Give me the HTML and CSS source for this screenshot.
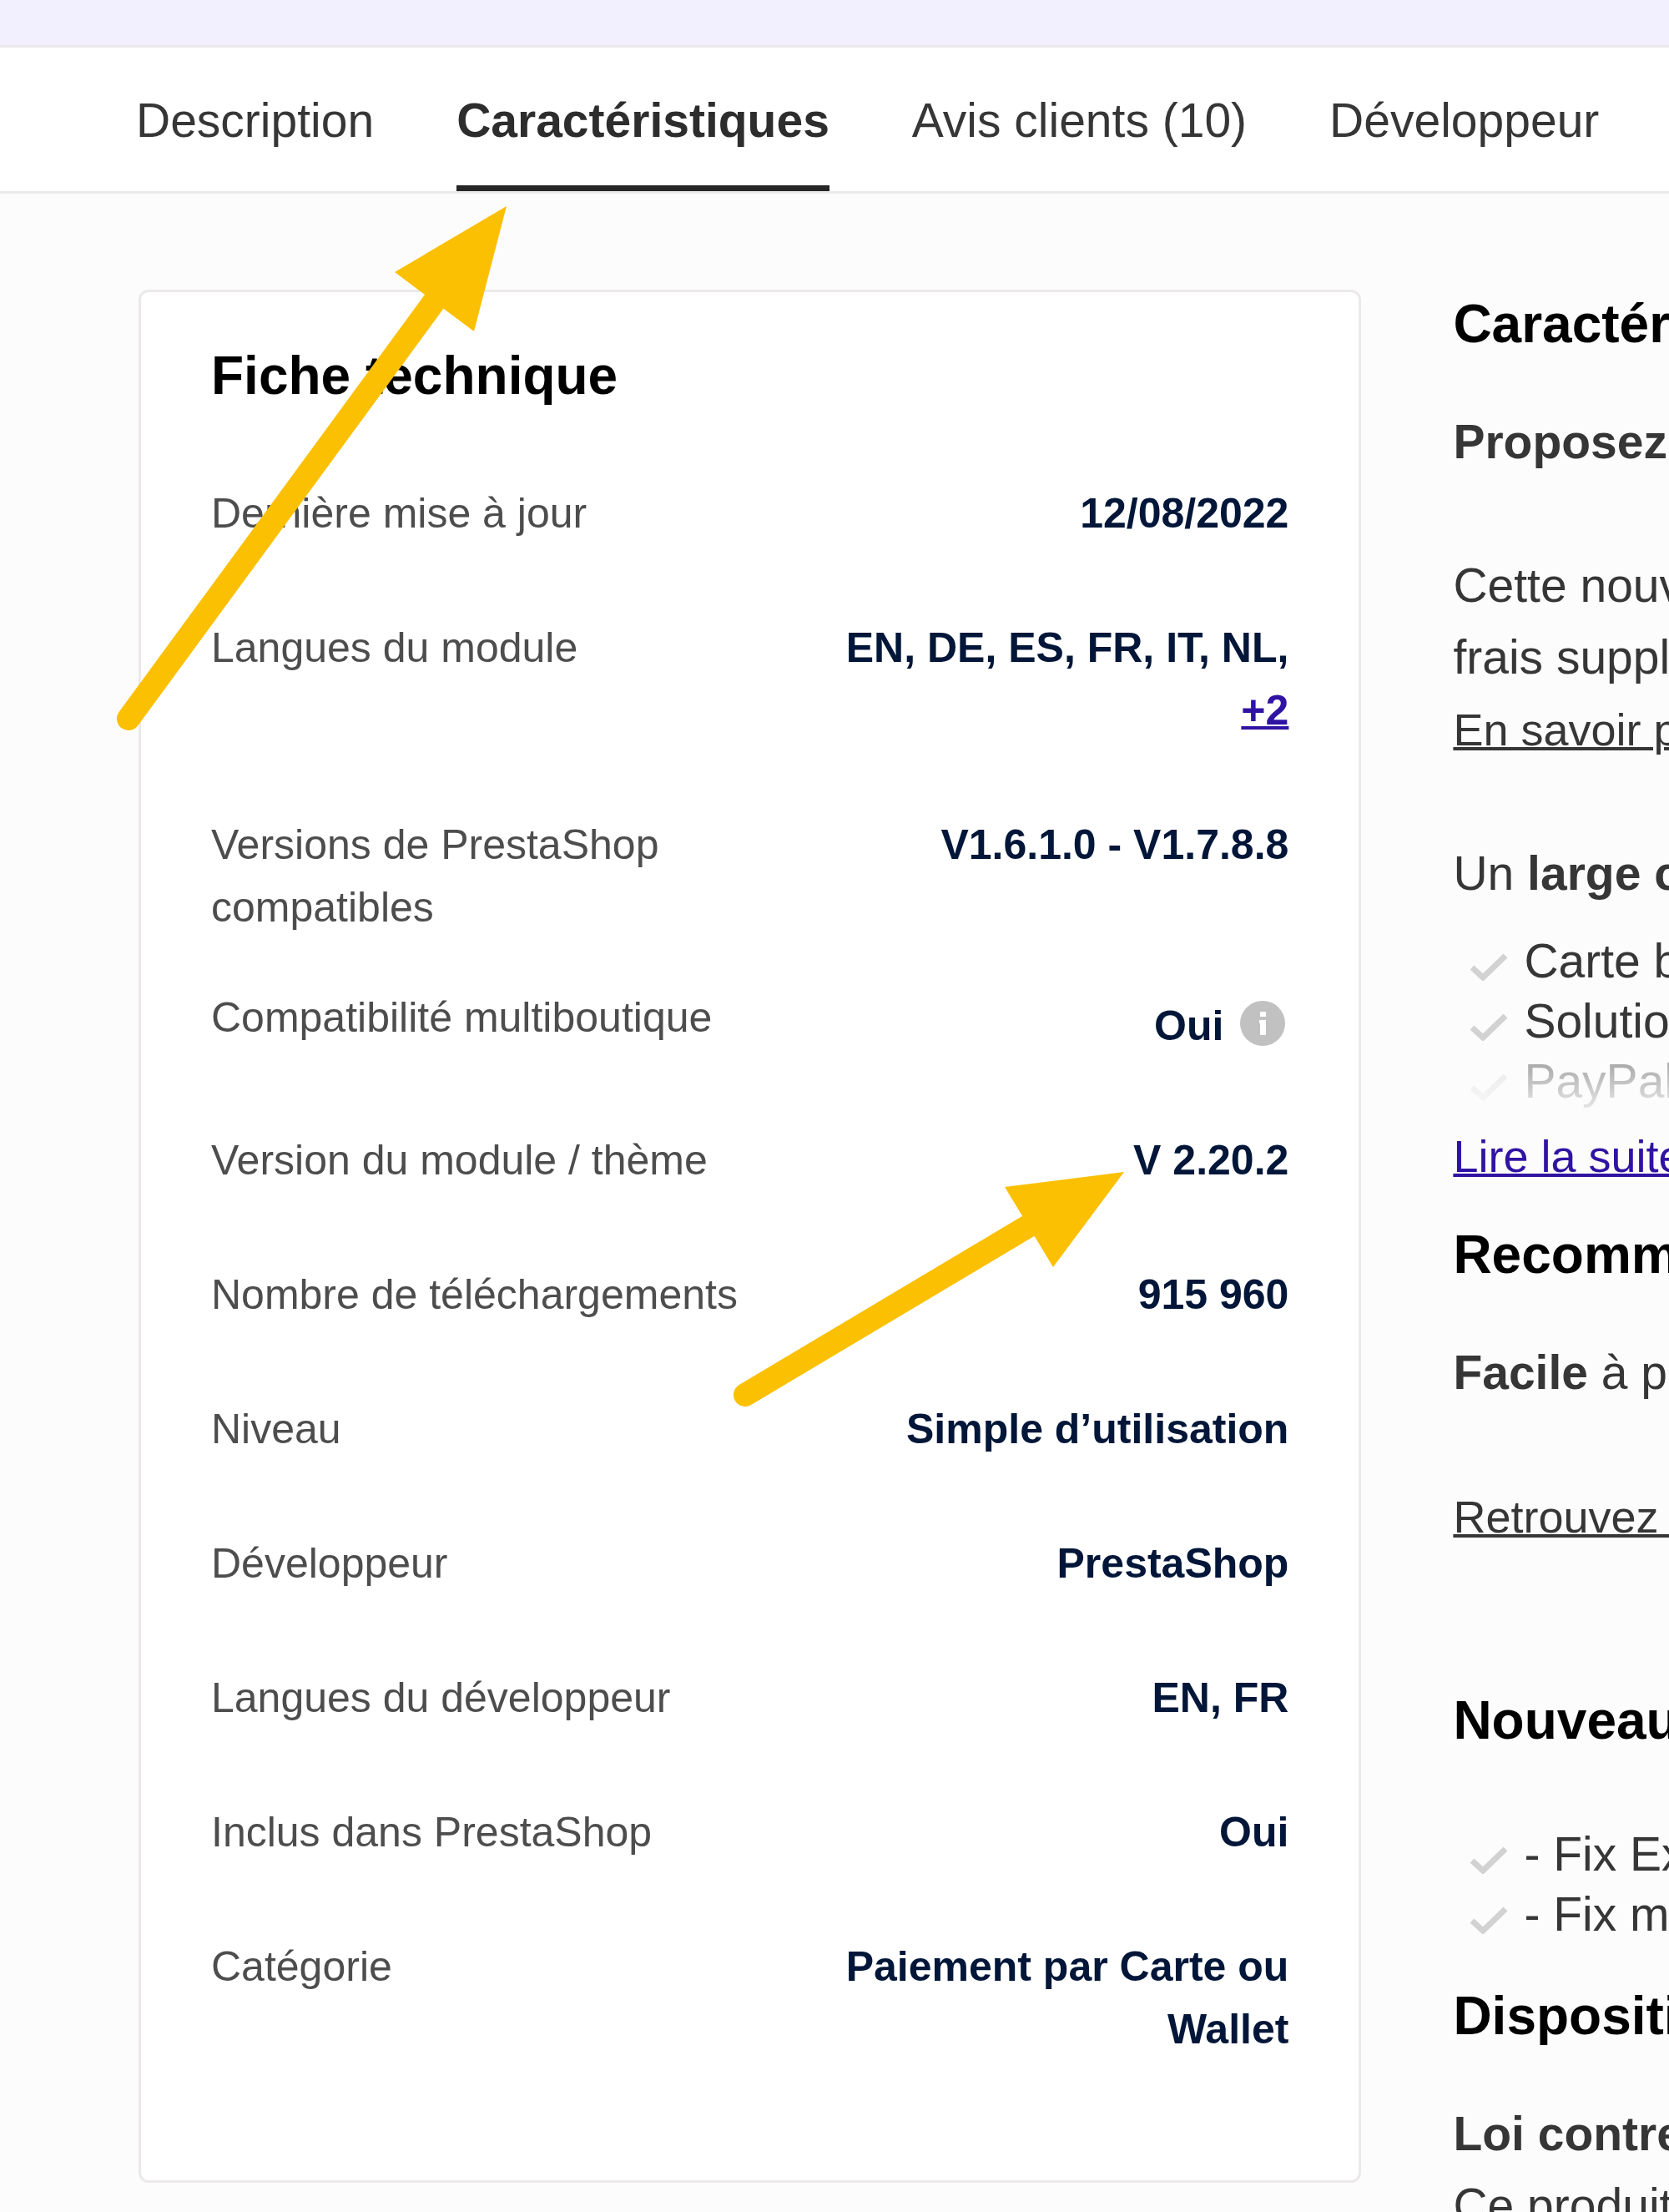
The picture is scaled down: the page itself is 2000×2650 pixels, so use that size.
FILE: index.html
```html
<!DOCTYPE html>
<html lang="fr">
<head>
    <meta charset="UTF-8">
    <meta name="viewport" content="width=device-width, initial-scale=1.0">
    <title>Caractéristiques du module</title>
    <link rel="stylesheet" href="styles.css">
</head>
<body>
    <div class="topbar"></div>

    <nav class="tabs">
        <a href="#description">Description</a>
        <a href="#caracteristiques" class="active">Caractéristiques</a>
        <a href="#avis">Avis clients (10)</a>
        <a href="#developpeur">Développeur</a>
    </nav>

    <main class="content">
        <section class="card" id="caracteristiques">
            <h2>Fiche technique</h2>
            <dl class="specs">
                <div class="row"><dt>Dernière mise à jour</dt><dd>12/08/2022</dd></div>
                <div class="row"><dt>Langues du module</dt><dd>EN, DE, ES, FR, IT, NL, <a href="#langues">+2</a></dd></div>
                <div class="row"><dt>Versions de PrestaShop compatibles</dt><dd>V1.6.1.0 - V1.7.8.8</dd></div>
                <div class="row">
                    <dt>Compatibilité multiboutique</dt>
                    <dd class="with-info">
                        <span>Oui</span>
                        <svg class="info" viewBox="0 0 54 54" aria-hidden="true">
                            <circle cx="27" cy="27" r="27" fill="#c1c1c1"/>
                            <rect x="24" y="13" width="7" height="6" fill="#fff"/>
                            <path d="M23 23h8v18h-7V27h-1z" fill="#fff"/>
                        </svg>
                    </dd>
                </div>
                <div class="row"><dt>Version du module / thème</dt><dd>V 2.20.2</dd></div>
                <div class="row"><dt>Nombre de téléchargements</dt><dd>915 960</dd></div>
                <div class="row"><dt>Niveau</dt><dd>Simple d’utilisation</dd></div>
                <div class="row"><dt>Développeur</dt><dd>PrestaShop</dd></div>
                <div class="row"><dt>Langues du développeur</dt><dd>EN, FR</dd></div>
                <div class="row"><dt>Inclus dans PrestaShop</dt><dd>Oui</dd></div>
                <div class="row"><dt>Catégorie</dt><dd>Paiement par Carte ou Wallet</dd></div>
            </dl>
        </section>

        <section class="details">
            <h2>Caractéristiques</h2>
            <div class="excerpt">
                <p>
                    <strong>Proposez</strong><br><br>
                    Cette nouvelle<br>
                    frais supplémentaires<br>
                    <a href="#savoir">En savoir plus</a><br><br>
                    Un <strong>large choix</strong>
                </p>
                <ul class="checks">
                    <li><svg viewBox="0 0 44 34"><path d="M2 18l13 12L42 4"/></svg>Carte bancaire</li>
                    <li><svg viewBox="0 0 44 34"><path d="M2 18l13 12L42 4"/></svg>Solutions</li>
                    <li><svg viewBox="0 0 44 34"><path d="M2 18l13 12L42 4"/></svg>PayPal</li>
                </ul>
            </div>
            <a href="#suite" class="more">Lire la suite</a>

            <h2>Recommandation</h2>
            <p><strong>Facile</strong> à paramétrer<br><br><a href="#doc">Retrouvez la documentation</a></p>

            <h2 class="news">Nouveautés</h2>
            <ul class="checks">
                <li><svg viewBox="0 0 44 34"><path d="M2 18l13 12L42 4"/></svg>- Fix Express</li>
                <li><svg viewBox="0 0 44 34"><path d="M2 18l13 12L42 4"/></svg>- Fix module</li>
            </ul>

            <h2 class="legal">Dispositif</h2>
            <p><strong>Loi contre</strong><br>Ce produit</p>
        </section>
    </main>

    <!-- flèches posées sur la page -->
    <svg class="arrow arrow-tab" viewBox="0 0 480 640" aria-hidden="true">
        <path d="M24 624L389 126" stroke-width="28" stroke-linecap="round"/>
        <path class="head" d="M477 10L343 89l95 71z"/>
    </svg>
    <svg class="arrow arrow-version" viewBox="0 0 480 300" aria-hidden="true">
        <path d="M23 281L362 79" stroke-width="28" stroke-linecap="round"/>
        <path class="head" d="M477 14L334 32l58 96z"/>
    </svg>
</body>
</html>
```
FILE: styles.css
```css
* {
    box-sizing: border-box;
}
body {
    font-family: "Liberation Sans", Arial, sans-serif;
    font-size: 57px;
    line-height: 86px;
    color: #363636;
    background-color: #fcfcfc;
    margin: 0;
    position: relative;
    height: 100vh;
    overflow: hidden;
}
h2, p, dl, dd, ul {
    margin: 0;
    padding: 0;
}
a {
    color: inherit;
    text-decoration-thickness: 4px;
}
h2 {
    font-size: 64px;
    color: #000;
}

/* bandeau + onglets */
.topbar {
    height: 57px;
    background-color: #f2f0fe;
    border-bottom: 3px solid #ece9ea;
}
.tabs {
    display: flex;
    gap: 99px;
    padding: 0 163px;
    background: #fff;
    border-bottom: 3px solid #ece9ea;
    white-space: nowrap;
}
.tabs a {
    padding: 44px 0 35px;
    border-bottom: 7px solid transparent;
    text-decoration: none;
}
.tabs .active {
    font-weight: bold;
    color: #2d2d2d;
    border-bottom-color: #262626;
}

.content {
    display: grid;
    grid-template-columns: 85fr 15fr;
    gap: 110px;
    align-items: start;
    padding: 115px 0 0 166px;
}

/* fiche technique */
.card {
    padding: 57px 84px;
    background: #fff;
    border: 3px solid #ece9ea;
    border-radius: 12px;
}
.specs {
    margin-top: 85px;
    font-size: 50px;
    line-height: 75px;
}
.row {
    display: grid;
    grid-template-columns: 56fr 44fr;
    margin-bottom: 57px;
}
dt {
    color: #4d4d4d;
}
dd {
    padding-bottom: 29px;
    font-weight: bold;
    color: #011638;
    text-align: right;
}
dd a, .more {
    color: #3013a3;
}
.with-info {
    display: flex;
    justify-content: flex-end;
    align-items: flex-end;
    gap: 20px;
    padding-top: 10px;
}
.info {
    width: 54px;
    height: 54px;
    margin: 0 4px 14px 0;
}

/* colonne de droite */
.details {
    overflow: hidden;
    white-space: nowrap;
}
.details h2 {
    margin-bottom: 57px;
    line-height: 82px;
}
.details p a, .more {
    font-size: 54px;
}
.details .checks {
    margin-top: 26px;
    list-style: none;
    line-height: 72px;
}
.checks li {
    display: flex;
    align-items: center;
    gap: 20px;
    padding-left: 21px;
}
.checks svg {
    flex: none;
    width: 44px;
    height: 34px;
    margin-top: 14px;
    fill: none;
    stroke: #d2d2d2;
    stroke-width: 7;
}
.excerpt {
    position: relative;
}
/* fondu sur la dernière ligne de l'extrait */
.excerpt::after {
    content: "";
    position: absolute;
    left: 0;
    right: 0;
    bottom: -8px;
    height: 80px;
    background: linear-gradient(rgba(252, 252, 252, 0.5), rgba(252, 252, 252, 0.95));
}
.more {
    display: block;
    margin: 11px 0 34px;
}
.details .news {
    margin-top: 160px;
}
.details .news + .checks {
    margin-top: 83px;
}
.details .legal {
    margin-top: 45px;
}

.arrow {
    position: absolute;
    fill: none;
    stroke: #fbc002;
}
.arrow .head {
    fill: #fbc002;
    stroke: none;
}
.arrow-tab {
    left: 130px;
    top: 237px;
    width: 480px;
    height: 640px;
}
.arrow-version {
    left: 870px;
    top: 1390px;
    width: 480px;
    height: 300px;
}
```
